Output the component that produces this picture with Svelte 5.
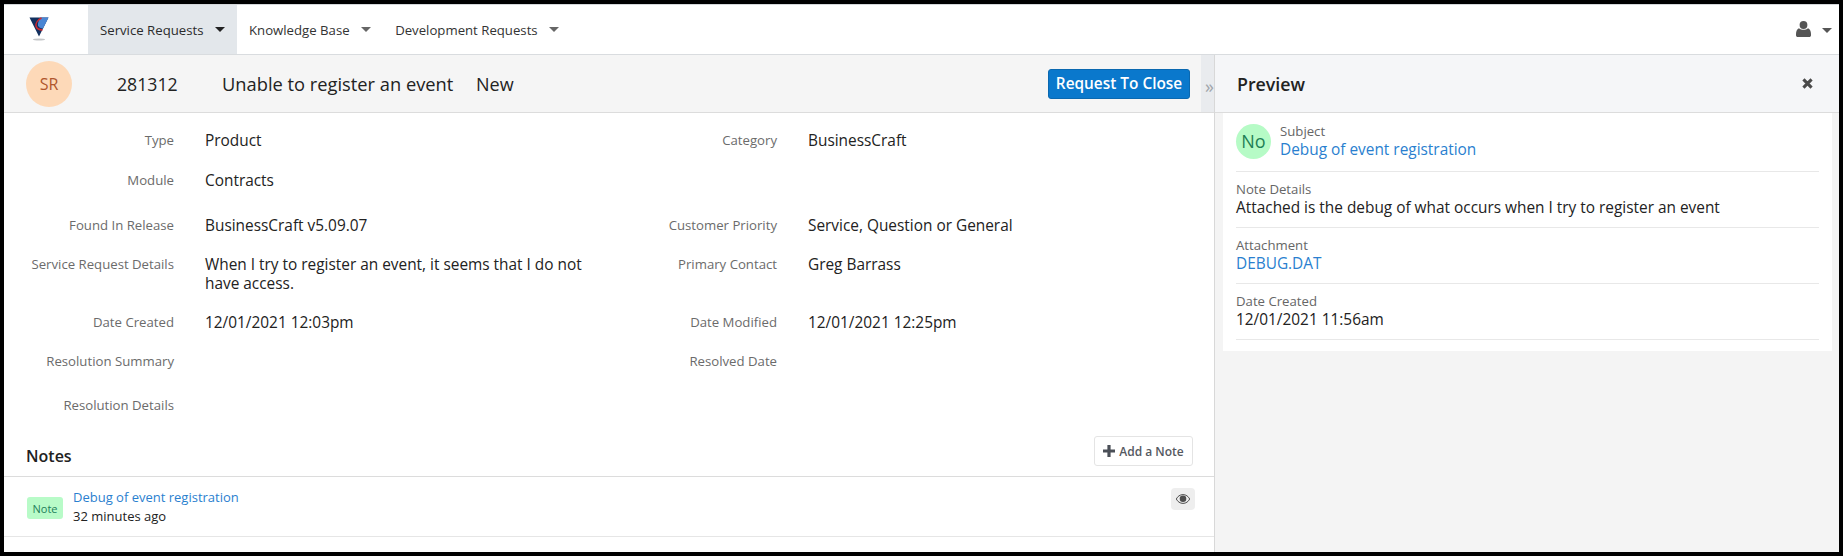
<script>
  const rows = [
    { h: 40, a: ['Type', 'Product'], b: ['Category', 'BusinessCraft'] },
    { h: 45, a: ['Module', 'Contracts'], b: null },
    { h: 39, a: ['Found In Release', 'BusinessCraft v5.09.07'], b: ['Customer Priority', 'Service, Question or General'] },
    { h: 58, a: ['Service Request Details', 'When I try to register an event, it seems that I do not have access.'], b: ['Primary Contact', 'Greg Barrass'] },
    { h: 39, a: ['Date Created', '12/01/2021 12:03pm'], b: ['Date Modified', '12/01/2021 12:25pm'] },
    { h: 44, a: ['Resolution Summary', ''], b: ['Resolved Date', ''] },
    { h: 40, a: ['Resolution Details', ''], b: null }
  ];
  const tabs = [
    { label: 'Service Requests', active: true },
    { label: 'Knowledge Base', active: false },
    { label: 'Development Requests', active: false }
  ];
</script>

<div class="frame">
  <div class="app">
    <nav class="nav">
      <div class="logo">
        <svg width="20" height="24" viewBox="0 0 20 24">
          <path d="M0.5 0.5H19.5L10 19.5Z" fill="#12305f" />
          <path d="M11.500 0.500H19.500L14 11.500C12 11.500 9.500 10.500 9 8.500C8.700 6 9.800 3 11.500 0.500Z" fill="#4a86d4" />
          <path d="M12.500 1C8.500 3 6.500 6.500 7 9C7.500 11.500 10 12.800 13.500 13" fill="none" stroke="#d0282e" stroke-width="1.500" />
          <ellipse cx="10" cy="22.500" rx="6" ry="1" fill="#c4c6c8" />
        </svg>
      </div>
      {#each tabs as t}
        <div class="tab" class:active={t.active}>
          <span>{t.label}</span>
          <i class="caret"></i>
        </div>
      {/each}
      <div class="user">
        <svg class="user-icon" width="15" height="16" viewBox="0 0 15 16">
          <circle cx="7.5" cy="4" r="3.9" fill="#555" />
          <path d="M3 7.2C4.2 8.3 5.7 8.8 7.5 8.8S10.8 8.3 12 7.2C13.8 7.8 15 9.8 15 13V14.2C15 15.2 14.3 16 13.2 16H1.8C.7 16 0 15.2 0 14.2V13C0 9.8 1.2 7.8 3 7.2Z" fill="#555" />
        </svg>
        <i class="caret user-caret"></i>
      </div>
    </nav>

    <div class="split">
      <main class="left">
        <header class="head">
          <div class="head-main">
            <div class="avatar sr">SR</div>
            <span class="num">281312</span>
            <span class="subject">Unable to register an event</span>
            <span class="status">New</span>
            <button class="primary">Request To Close</button>
          </div>
          <div class="strip"><span class="chev">»</span></div>
        </header>

        <section class="details">
          {#each rows as r}
            <div class="row" style="height:{r.h}px">
              <div class="label">{r.a[0]}</div>
              <div class="value">{r.a[1]}</div>
              <div class="label">{r.b ? r.b[0] : ''}</div>
              <div class="value">{r.b ? r.b[1] : ''}</div>
            </div>
          {/each}
        </section>

        <div class="notes-head">
          <h2>Notes</h2>
          <button class="add">
            <svg width="12" height="12" viewBox="0 0 12 12"><path d="M4.4 0H7.6V4.4H12V7.6H7.6V12H4.4V7.6H0V4.4H4.4Z" fill="#4a4f57" /></svg>
            Add a Note
          </button>
        </div>
        <div class="note">
          <span class="badge">Note</span>
          <div class="note-text">
            <a href="#top">Debug of event registration</a>
            <div class="ago">32 minutes ago</div>
          </div>
          <button class="eye" aria-label="View">
            <svg width="14" height="10" viewBox="0 0 14 10">
              <path d="M7 .6C4 .6 1.6 2.4.3 5 1.6 7.600 4 9.400 7 9.400S12.400 7.600 13.700 5C12.400 2.400 10 .6 7 .6Z" fill="none" stroke="#4d4d4d" stroke-width="1" />
              <circle cx="7" cy="4.800" r="3.300" fill="#4d4d4d" />
            </svg>
          </button>
        </div>
      </main>

      <aside class="right">
        <header class="phead">
          <span class="ptitle">Preview</span>
          <svg class="close" width="11" height="11" viewBox="0 0 10 10"><path d="M1.300 1.300L8.700 8.700M8.700 1.300L1.300 8.700" stroke="#4a4a4a" stroke-width="2.800" /></svg>
        </header>
        <div class="card">
          <div class="item first">
            <div class="avatar no">No</div>
            <div>
              <div class="plabel">Subject</div>
              <a class="pval" href="#top">Debug of event registration</a>
            </div>
          </div>
          <div class="item">
            <div class="plabel">Note Details</div>
            <div class="pval">Attached is the debug of what occurs when I try to register an event</div>
          </div>
          <div class="item">
            <div class="plabel">Attachment</div>
            <a class="pval" href="#top">DEBUG.DAT</a>
          </div>
          <div class="item">
            <div class="plabel">Date Created</div>
            <div class="pval">12/01/2021 11:56am</div>
          </div>
        </div>
      </aside>
    </div>
  </div>
</div>

<style>
  :global(body) { margin: 0; background: #000; }
  .frame { width: 1843px; height: 556px; box-sizing: border-box; padding: 4px; background: #000; font-family: "Open Sans", sans-serif; color: #222; overflow: hidden; }
  .app { height: 548px; width: 1835px; background: #fff; display: flex; flex-direction: column; }
  .nav { height: 51px; box-sizing: border-box; border-top: 1px solid #d4d7da; border-bottom: 1px solid #d9dcdf; display: flex; align-items: stretch; font-size: 13.200px; flex: none; }
  .logo { width: 84px; box-sizing: border-box; padding: 12px 0 0 25px; }
  .tab { display: flex; align-items: center; padding: 0 12px; gap: 11.500px; color: #333; }
  .tab.active { background: #e3e7eb; color: #2b2b2b; }
  .caret { display: block; width: 0; height: 0; border-left: 5px solid transparent; border-right: 5px solid transparent; border-top: 5px solid #666; }
  .tab.active .caret { border-top-color: #222; }
  .user { margin-left: auto; display: flex; align-items: center; gap: 11px; padding-right: 7px; }
  .user-icon { margin-top: -2px; }
  .user-caret { border-top-color: #555; margin-top: 2px; }
  .split { flex: 1; display: flex; min-height: 0; }
  .left { width: 1211px; box-sizing: border-box; border-right: 1px solid #d8d8d8; flex: none; display: flex; flex-direction: column; }
  .head { height: 58px; box-sizing: border-box; background: #f5f5f5; border-bottom: 1px solid #dcdcdc; display: flex; flex: none; }
  .head-main { flex: 1; display: flex; align-items: center; padding-left: 22px; min-width: 0; }
  .strip { width: 13px; flex: none; background: #e9ebee; display: flex; align-items: center; padding-top: 5px; box-sizing: border-box; }
  .chev { color: #a0a5ab; font-size: 18px; line-height: 18px; padding-left: 4px; }
  .avatar { border-radius: 50%; display: flex; align-items: center; justify-content: center; flex: none; }
  .sr { width: 46px; height: 46px; background: #fdd9b8; color: #b0562d; font-size: 16px; }
  .num { font-size: 17.700px; margin-left: 45px; width: 105px; color: #222; }
  .subject { font-size: 18.300px; width: 254px; color: #222; }
  .status { font-size: 18px; color: #222; }
  .primary { margin-left: auto; margin-right: 11px; width: 142px; height: 30px; border: 1px solid #0a68b0; border-radius: 3px; background: #0a78cc; color: #fff; font: 600 15.400px "Open Sans", sans-serif; padding: 0; }
  .details { padding-top: 18px; flex: none; }
  .row { display: grid; grid-template-columns: 170px 390px 151px 300px; column-gap: 31px; line-height: 19px; }
  .label { font-size: 13.200px; line-height: 18px; color: #6b6b6b; text-align: right; }
  .value { font-size: 15.400px; color: #222; }
  .notes-head { display: flex; align-items: flex-end; justify-content: space-between; height: 45px; box-sizing: border-box; padding: 0 21px 0 22px; border-bottom: 1px solid #dcdcdc; flex: none; margin-top: -4px; }
  h2 { margin: 0 0 9px; font-size: 16px; font-weight: 600; line-height: 22px; color: #222; }
  .add { height: 30px; width: 99px; box-sizing: border-box; padding: 0; border: 1px solid #e4e4e4; border-radius: 3px; background: #fff; color: #55595f; font: 600 12px "Open Sans", sans-serif; display: flex; align-items: center; justify-content: center; gap: 4px; margin-bottom: 10px; }
  .note { height: 60px; box-sizing: border-box; border-bottom: 1px solid #e6e6e6; display: flex; padding: 0 19px 0 23px; align-items: flex-start; flex: none; }
  .badge { margin-top: 20px; width: 36px; height: 22px; border-radius: 3px; background: #b8fbc8; color: #22805a; font-size: 11px; display: flex; align-items: center; justify-content: center; }
  .note-text { margin-left: 10px; margin-top: 11px; font-size: 13px; line-height: 19px; }
  a { color: #2a7fcf; text-decoration: none; }
  .ago { color: #222; font-size: 13px; }
  .eye { margin-left: auto; margin-top: 11px; width: 24px; height: 22px; padding: 0; border: 0; border-radius: 4px; background: #eeeeee; display: flex; align-items: center; justify-content: center; }
  .right { flex: 1; background: #f4f4f4; display: flex; flex-direction: column; min-width: 0; }
  .phead { height: 58px; box-sizing: border-box; background: #f5f6f8; border-bottom: 1px solid #dcdcdc; display: flex; align-items: center; justify-content: space-between; padding: 0 26px 0 22px; flex: none; }
  .ptitle { font-size: 17.800px; font-weight: 600; color: #222; }
  .card { margin-left: 8px; width: 609px; height: 238px; box-sizing: border-box; background: #fff; padding: 0 13px; flex: none; }
  .item { height: 56px; box-sizing: border-box; border-bottom: 1px solid #e8e8e8; padding-top: 8px; line-height: 19px; }
  .item.first { height: 59px; padding-top: 11px; display: flex; gap: 9px; }
  .item.first > div:last-child { margin-top: -2px; }
  .no { width: 35px; height: 35px; background: #b6fbc6; color: #1e7f55; font-size: 18px; }
  .plabel { font-size: 13.200px; color: #666; line-height: 18px; }
  .pval { display: block; font-size: 15.400px; line-height: 19px; }
  a.pval { color: #2a7fcf; }
  div.pval { color: #222; }
</style>
